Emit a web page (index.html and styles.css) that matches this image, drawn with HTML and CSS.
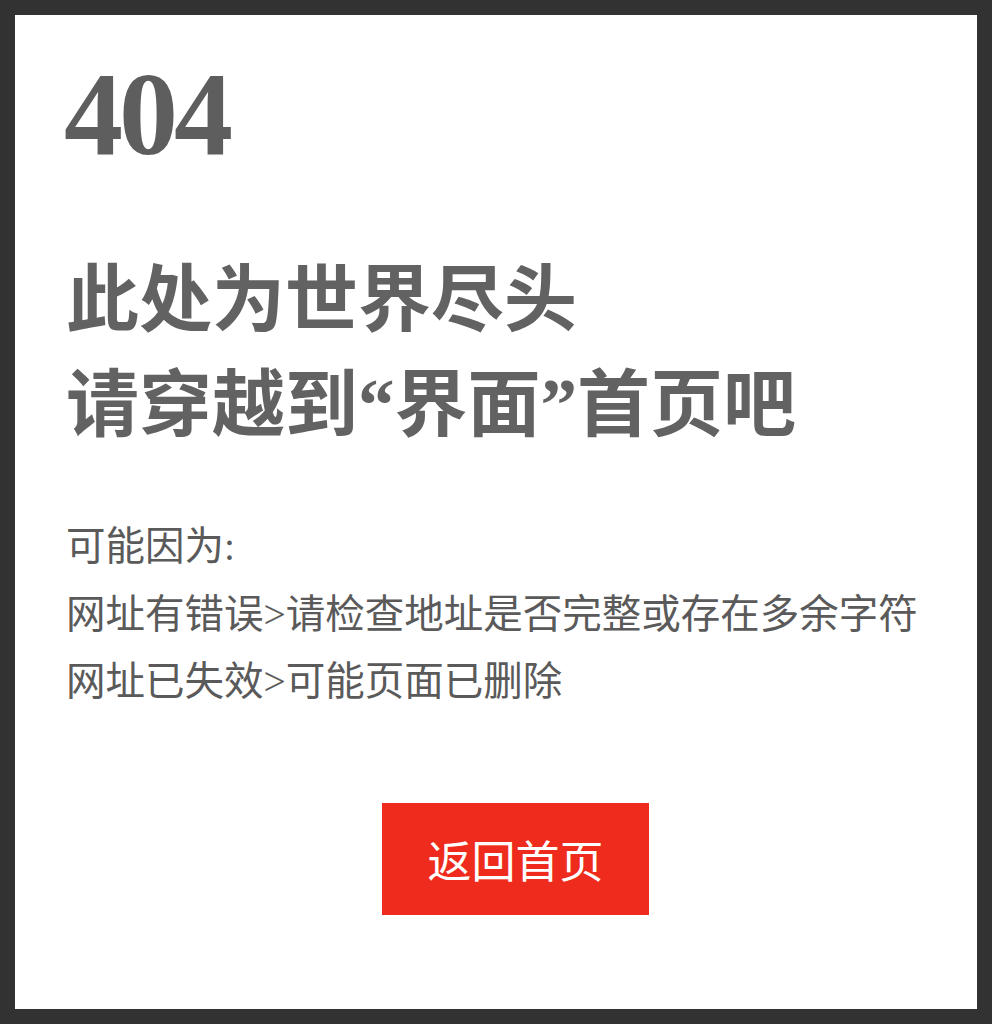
FILE: index.html
```html
<!DOCTYPE html>
<html lang="zh-CN">
<head>
<meta charset="utf-8">
<title>404</title>
<link rel="stylesheet" href="styles.css">
</head>
<body>
<main class="card">
  <div class="code">404</div>
  <h1 class="title">此处为世界尽头<br>请穿越到“界面”首页吧</h1>
  <div class="reasons">
    <p>可能因为:</p>
    <p>网址有错误&gt;请检查地址是否完整或存在多余字符</p>
    <p>网址已失效&gt;可能页面已删除</p>
  </div>
  <div class="actions">
    <a class="btn" href="#">返回首页</a>
  </div>
</main>
</body>
</html>
```

FILE: styles.css
```css
html, body {
  margin: 0;
  padding: 0;
  background: #323232;
}
body {
  padding: 15px;
  box-sizing: border-box;
  height: 1024px;
}
.card {
  background: #ffffff;
  height: 994px;
  box-sizing: border-box;
  padding: 41px 51px 0 51px;
  color: #606060;
  font-family: "Liberation Serif", "Noto Sans CJK SC", serif;
}
.code {
  font-size: 118px;
  line-height: 118px;
  font-weight: bold;
  color: #5e5e5e;
  letter-spacing: -4px;
  margin-left: -2px;
}
.title {
  margin: 74px 0 0 0;
  font-size: 73px;
  line-height: 105px;
  font-weight: bold;
  color: #626262;
}
.reasons {
  margin-top: 56px;
  font-size: 39.5px;
  line-height: 67.5px;
  color: #5a5a5a;
}
.reasons p {
  margin: 0;
}
.actions {
  display: flex;
  margin-top: 86px;
}
.btn {
  margin-left: 316px;
  width: 267px;
  height: 112px;
  display: flex;
  align-items: center;
  justify-content: center;
  background: #ef2b1d;
  color: #ffffff;
  font-size: 44px;
  text-decoration: none;
}
```
